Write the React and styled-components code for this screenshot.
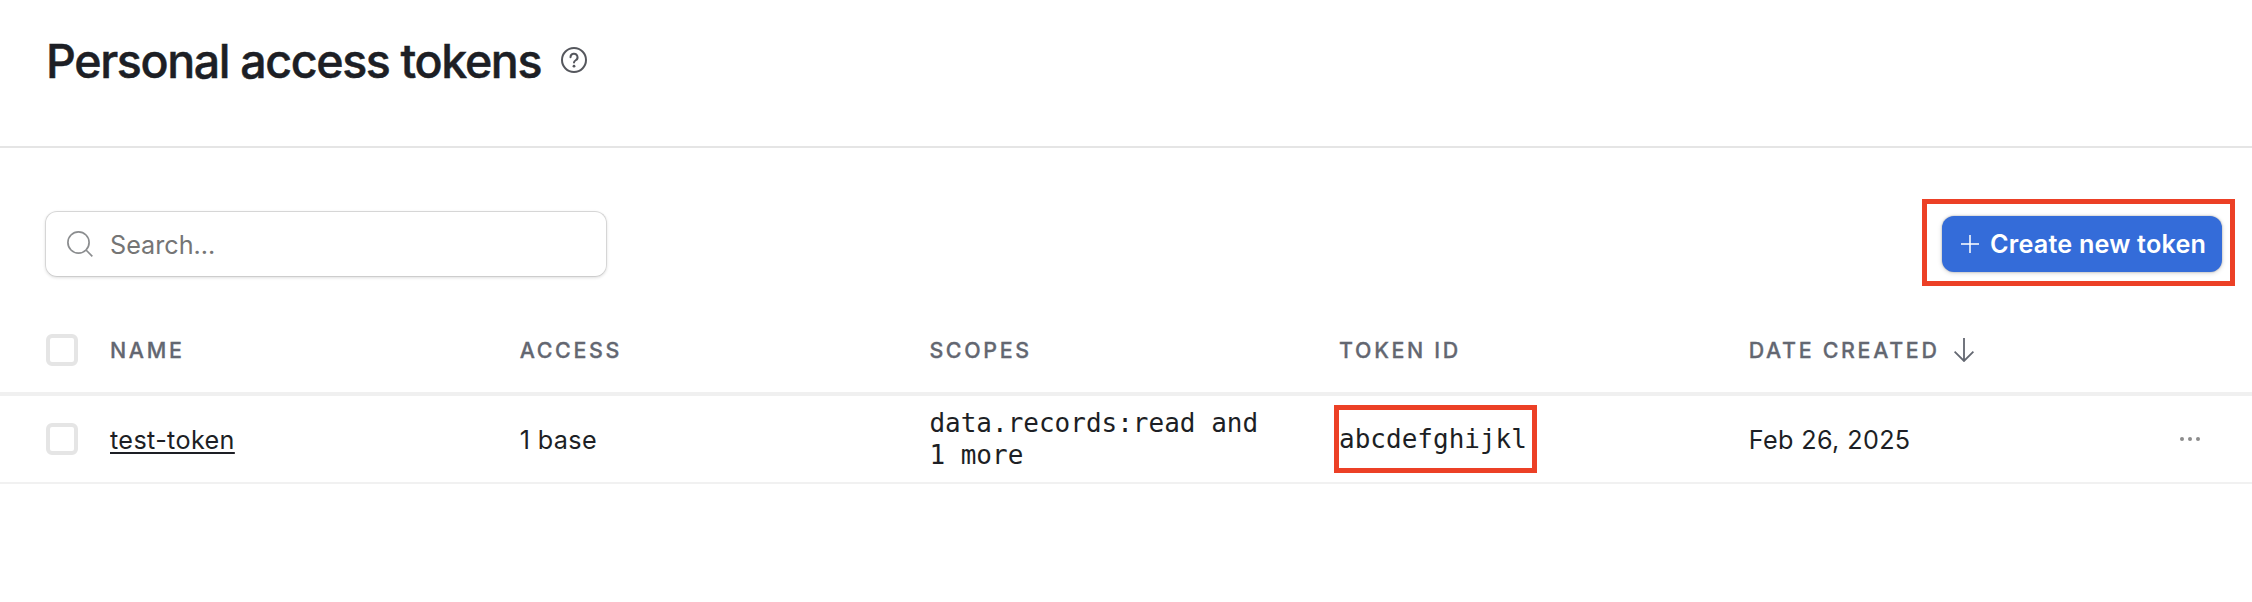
import React from 'react';
import styled, { createGlobalStyle } from 'styled-components';

const GlobalStyle = createGlobalStyle`
  *, *::before, *::after { box-sizing: border-box; }
  body {
    margin: 0;
    background: #fff;
    color: #1d1f25;
    font-family: Inter, "Liberation Sans", sans-serif;
    font-size: 25.2px;
    letter-spacing: 0.36px;
  }
`;

const Page = styled.main`
  display: flex;
  flex-direction: column;
  min-height: 602px;
  background: #fff;
`;

const Header = styled.header`
  display: flex;
  align-items: center;
  gap: 20px;
  height: 148px;
  padding: 0 46px 26px;
  border-bottom: 2px solid #e5e5e5;
`;

const Title = styled.h1`
  margin: 2px 0 0;
  font-size: 46.5px;
  font-weight: 500;
  line-height: 60px;
  letter-spacing: -1.36px;
  -webkit-text-stroke: 0.5px currentColor;
`;

const Icon = styled.svg`
  display: block;
  flex: none;
  fill: none;
  stroke: currentColor;
  stroke-width: ${(p) => p.$weight || 2};
  color: ${(p) => p.$color || 'inherit'};
`;

const Toolbar = styled.div`
  display: flex;
  justify-content: space-between;
  align-items: center;
  height: 66px;
  margin: 63px 30px 0 45px;
`;

const SearchField = styled.label`
  display: flex;
  align-items: center;
  gap: 17px;
  width: 562px;
  height: 66px;
  padding: 0 20px 0 21px;
  border: 1px solid #d6d6d6;
  border-bottom-color: #cdcdcd;
  border-radius: 12px;
  box-shadow: 0 1px 3px rgba(0, 0, 0, 0.12);
`;

const SearchInput = styled.input`
  flex: 1;
  min-width: 0;
  padding: 2px 0 0;
  border: 0;
  outline: 0;
  background: transparent;
  font: inherit;
  letter-spacing: 0;
  color: inherit;
  &::placeholder { color: #757575; opacity: 1; }
`;

const CreateButton = styled.button`
  position: relative;
  display: flex;
  align-items: center;
  gap: 11px;
  width: 280px;
  height: 56px;
  padding: 0 0 0 19px;
  border: 0;
  border-radius: 12px;
  background: #346cd9;
  box-shadow: 0 0 2px rgba(0, 0, 0, 0.3), 0 1px 5px rgba(0, 0, 0, 0.16);
  color: #fff;
  font: inherit;
  font-weight: 600;
  letter-spacing: 0.2px;
  white-space: nowrap;
`;

const Highlight = styled.span`
  position: absolute;
  inset: ${(p) => p.$inset};
  border: 5px solid #ec4026;
  pointer-events: none;
`;

const Table = styled.div`
  display: flex;
  flex-direction: column;
`;

const Row = styled.div`
  display: grid;
  grid-template-columns: 64px repeat(4, 409.7px) 1fr 82px;
  align-items: center;
  padding-left: 46px;
`;

const HeadRow = styled(Row)`
  height: 119px;
  padding-top: 31px;
  border-bottom: 4px solid #f0f0f0;
  color: #636771;
  font-size: 21.4px;
  font-weight: 500;
  letter-spacing: 2.68px;
`;

const HeadLabel = styled.span`
  -webkit-text-stroke: 0.3px currentColor;
`;

const BodyRow = styled(Row)`
  height: 88px;
  border-bottom: 2px solid #f1f1f1;
`;

const Cell = styled.div`
  display: flex;
  align-items: center;
  gap: 14px;
  padding-top: ${(p) => p.$drop || 0}px;
  white-space: nowrap;
`;

const Checkbox = styled.span`
  width: 32px;
  height: 32px;
  border: 4px solid #e5e5e5;
  border-radius: 6px;
`;

const TokenLink = styled.a`
  text-decoration: underline;
  text-decoration-thickness: 2px;
  text-underline-offset: 3px;
  text-decoration-skip-ink: none;
  color: inherit;
`;

const Code = styled.code`
  position: relative;
  width: ${(p) => p.$width || 'auto'};
  font-family: "DejaVu Sans Mono", monospace;
  font-size: 26px;
  line-height: 32px;
  letter-spacing: 0;
  white-space: normal;
`;

const MoreButton = styled.button`
  display: flex;
  justify-content: center;
  width: 32px;
  margin-left: 4px;
  padding: 0;
  border: 0;
  background: none;
  color: #8c8c8c;
`;

export default function App() {
  return (
    <>
      <GlobalStyle />
      <Page>
        <Header>
          <Title>Personal access tokens</Title>
          <Icon width="26" height="26" viewBox="0 0 26 26" $color="#55575d">
            <circle cx="13" cy="13" r="12" />
            <path d="M9.5 10.2a3.5 3.5 0 1 1 5.2 3.05c-1.1.62-1.7 1.15-1.7 2.25" strokeLinecap="round" />
            <circle cx="13" cy="19.2" r="1.4" fill="currentColor" stroke="none" />
          </Icon>
        </Header>

        <Toolbar>
          <SearchField>
            <Icon width="26" height="26" viewBox="0 0 26 26" $color="#8b8d8f" $weight="1.7">
              <circle cx="11.5" cy="11.5" r="10.6" />
              <path d="M19 19l6.3 6.3" />
            </Icon>
            <SearchInput placeholder="Search..." aria-label="Search" />
          </SearchField>
          <CreateButton type="button">
            <Icon width="18" height="18" viewBox="0 0 18 18" $weight="1.5">
              <path d="M9 0v18M0 9h18" />
            </Icon>
            Create new token
            <Highlight $inset="-17px -13px -14px -20px" />
          </CreateButton>
        </Toolbar>

        <Table>
          <HeadRow>
            <Checkbox />
            <Cell><HeadLabel>NAME</HeadLabel></Cell>
            <Cell><HeadLabel>ACCESS</HeadLabel></Cell>
            <Cell><HeadLabel>SCOPES</HeadLabel></Cell>
            <Cell><HeadLabel>TOKEN ID</HeadLabel></Cell>
            <Cell>
              <HeadLabel>DATE CREATED</HeadLabel>
              <Icon width="20" height="24" viewBox="0 0 20 24" $weight="1.8">
                <path d="M10 0v23M.6 13.7L10 23l9.4-9.3" />
              </Icon>
            </Cell>
          </HeadRow>
          <BodyRow>
            <Checkbox />
            <Cell $drop={2}><TokenLink>test-token</TokenLink></Cell>
            <Cell $drop={2}>1 base</Cell>
            <Cell><Code $width="340px">data.records:read and 1 more</Code></Cell>
            <Cell>
              <Code>
                abcdefghijkl
                <Highlight $inset="-18px -10px -18px -5px" />
              </Code>
            </Cell>
            <Cell $drop={2}>Feb 26, 2025</Cell>
            <MoreButton type="button" aria-label="More options">
              <Icon width="20" height="4" viewBox="0 0 20 4">
                <g fill="currentColor" stroke="none">
                  <circle cx="2" cy="2" r="2" />
                  <circle cx="10" cy="2" r="2" />
                  <circle cx="18" cy="2" r="2" />
                </g>
              </Icon>
            </MoreButton>
          </BodyRow>
        </Table>
      </Page>
    </>
  );
}
